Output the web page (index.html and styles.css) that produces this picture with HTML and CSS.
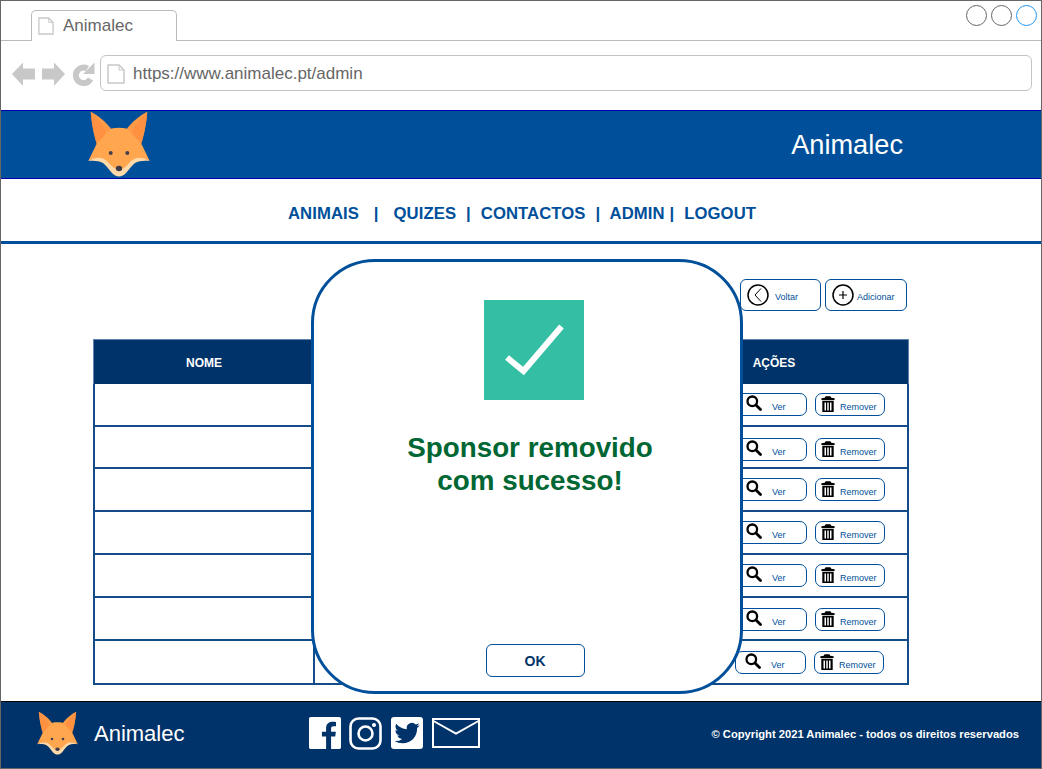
FILE: index.html
```html
<!DOCTYPE html>
<html lang="pt">
<head>
<meta charset="utf-8">
<title>Animalec</title>
<link rel="stylesheet" href="styles.css">
</head>
<body>
<svg class="defs" aria-hidden="true">
  <symbol id="fox" viewBox="0 0 62 66">
    <path fill="#ff9a47" d="M2.7 .7C10 4 18 11 24 19L10 36C6 26 3.500 12 2.700 .7ZM59.300 .7C52 4 44 11 38 19L52 36C56 26 58.500 12 59.300 .7Z"/>
    <path fill="#ff8a3d" d="M2.700 .7C9 8 16 14 18 21L10 36C6 26 3.500 12 2.700 .7ZM59.300 .7C53 8 46 14 44 21L52 36C56 26 58.500 12 59.300 .7Z" opacity=".55"/>
    <path fill="#ffa64f" d="M23.500 17.500C28 16.500 34 16.500 38.500 17.500L53 32L61.700 50C56 47 50 47 46 50C43 52 38 57 36 60L31 65L26 60C24 57 19 52 16 50C12 47 6 47 .3 50L9 32Z"/>
    <path fill="#ffd9a8" d="M.3 50C6 46.500 12 46 16 48C20 50 22 54 25 56C27 57.500 29 58 31 58C33 58 35 57.500 37 56C40 54 42 50 46 48C50 46 56 46.500 61.700 50C55 49.500 51 50 47 52C43 55 41 59 38 62C36 64 33.500 65.500 31 65.500C28.500 65.500 26 64 24 62C21 59 19 55 15 52C11 50 7 49.500 .3 50Z"/>
    <circle cx="22.700" cy="42" r="2" fill="#45404c"/>
    <circle cx="39.300" cy="42" r="2" fill="#45404c"/>
    <ellipse cx="31" cy="57.500" rx="3.200" ry="2.700" fill="#3c3a48"/>
  </symbol>
  <symbol id="page" viewBox="0 0 18 20">
    <path fill="#fff" stroke="#c8c8c8" stroke-width="1.500" d="M1 1H12L17 6V19H1Z"/>
    <path fill="none" stroke="#c8c8c8" d="M12 1V6H17"/>
  </symbol>
  <symbol id="search" viewBox="0 0 16 16">
    <circle cx="6.300" cy="6.300" r="4.800" fill="none" stroke="#000" stroke-width="2.300"/>
    <path stroke="#000" stroke-width="2.800" stroke-linecap="round" d="M10.200 10.200L14.500 14.500"/>
  </symbol>
  <symbol id="trash" viewBox="0 0 14 16">
    <path fill="#000" fill-rule="evenodd" d="M5.200 .3H8.800C9.600 .3 10 1 10.200 1.800L13.600 2.300V4H.4V2.300L3.800 1.800C4 1 4.400 .3 5.200 .3ZM1.300 4.800H12.700V16H1.300ZM3.500 6.500V14.500H5V6.500ZM6.250 6.500V14.500H7.750V6.500ZM9 6.500V14.500H10.500V6.500Z"/>
  </symbol>
</svg>

<div class="window">
  <div class="tabbar">
    <div class="tab">
      <svg class="tab-icon"><use href="#page"/></svg>
      <span>Animalec</span>
    </div>
    <div class="tab-fill">
      <span class="dot"></span><span class="dot"></span><span class="dot dot-active"></span>
    </div>
  </div>

  <div class="toolbar">
    <svg class="nav-arrow" viewBox="0 0 23 24"><path fill="#c8c8c8" d="M0 12L11 .5V6.500H23V17.500H11V24Z"/></svg>
    <svg class="nav-arrow" viewBox="0 0 23 24"><path fill="#c8c8c8" d="M23 12L12 .5V6.500H0V17.500H12V24Z"/></svg>
    <svg class="nav-reload" viewBox="0 0 22 24">
      <path fill="none" stroke="#c8c8c8" stroke-width="6" d="M17.500 17A7.800 7.800 0 1 1 14.500 6.500"/>
      <path fill="#c8c8c8" d="M21.500 .5V12H10Z"/>
    </svg>
    <div class="address">
      <svg class="address-icon"><use href="#page"/></svg>
      <span class="address-text">https://www.animalec.pt/admin</span>
    </div>
  </div>

  <header class="site-header">
    <svg class="fox-lg"><use href="#fox"/></svg>
    <span class="site-title">Animalec</span>
  </header>

  <nav class="site-nav">ANIMAIS   |   QUIZES  |  CONTACTOS  |  ADMIN |  LOGOUT</nav>

  <main class="content">
    <div class="actions">
      <button class="action-btn action-back">
        <svg class="action-icon" viewBox="0 0 22 22"><circle cx="11" cy="11" r="10" fill="none" stroke="#000" stroke-width="1.500"/><path fill="none" stroke="#000" stroke-width="1" d="M14 4.500L8 11L14 17.500"/></svg>
        <span>Voltar</span>
      </button>
      <button class="action-btn action-add">
        <svg class="action-icon" viewBox="0 0 22 22"><circle cx="11" cy="11" r="10" fill="none" stroke="#000" stroke-width="1.500"/><path stroke="#000" stroke-width="1.200" d="M11 7V15M7 11H15"/></svg>
        <span>Adicionar</span>
      </button>
    </div>

    <div class="table">
      <div class="thead">
        <div class="th col-name">NOME</div>
        <div class="th col-mid"></div>
        <div class="th col-actions">AÇÕES</div>
      </div>
      <div class="row"><div class="cell col-name"></div><div class="cell col-mid"></div><div class="cell col-actions row-actions"><a class="mini mini-ver"><svg class="mini-search"><use href="#search"/></svg><span>Ver</span></a><a class="mini mini-rem"><svg class="mini-trash"><use href="#trash"/></svg><span>Remover</span></a></div></div>
      <div class="row row-short"><div class="cell col-name"></div><div class="cell col-mid"></div><div class="cell col-actions row-actions row-actions-low"><a class="mini mini-ver"><svg class="mini-search"><use href="#search"/></svg><span>Ver</span></a><a class="mini mini-rem"><svg class="mini-trash"><use href="#trash"/></svg><span>Remover</span></a></div></div>
      <div class="row"><div class="cell col-name"></div><div class="cell col-mid"></div><div class="cell col-actions row-actions"><a class="mini mini-ver"><svg class="mini-search"><use href="#search"/></svg><span>Ver</span></a><a class="mini mini-rem"><svg class="mini-trash"><use href="#trash"/></svg><span>Remover</span></a></div></div>
      <div class="row"><div class="cell col-name"></div><div class="cell col-mid"></div><div class="cell col-actions row-actions"><a class="mini mini-ver"><svg class="mini-search"><use href="#search"/></svg><span>Ver</span></a><a class="mini mini-rem"><svg class="mini-trash"><use href="#trash"/></svg><span>Remover</span></a></div></div>
      <div class="row"><div class="cell col-name"></div><div class="cell col-mid"></div><div class="cell col-actions row-actions"><a class="mini mini-ver"><svg class="mini-search"><use href="#search"/></svg><span>Ver</span></a><a class="mini mini-rem"><svg class="mini-trash"><use href="#trash"/></svg><span>Remover</span></a></div></div>
      <div class="row"><div class="cell col-name"></div><div class="cell col-mid"></div><div class="cell col-actions row-actions row-actions-mid"><a class="mini mini-ver"><svg class="mini-search"><use href="#search"/></svg><span>Ver</span></a><a class="mini mini-rem"><svg class="mini-trash"><use href="#trash"/></svg><span>Remover</span></a></div></div>
      <div class="row row-tall"><div class="cell col-name"></div><div class="cell col-mid"></div><div class="cell col-actions row-actions row-actions-last"><a class="mini mini-ver"><svg class="mini-search"><use href="#search"/></svg><span>Ver</span></a><a class="mini mini-rem"><svg class="mini-trash"><use href="#trash"/></svg><span>Remover</span></a></div></div>
    </div>
  </main>

  <footer class="site-footer">
    <svg class="fox-sm"><use href="#fox"/></svg>
    <span class="footer-title">Animalec</span>
    <div class="social">
      <svg class="soc soc-fb" viewBox="0 0 24 24"><path fill="#fff" d="M22.676 0H1.324C.593 0 0 .593 0 1.324v21.352C0 23.408.593 24 1.324 24h11.494v-9.294H9.689v-3.621h3.129V8.410c0-3.099 1.894-4.785 4.659-4.785 1.325 0 2.464.097 2.796.141v3.240h-1.921c-1.500 0-1.792.721-1.792 1.771v2.311h3.584l-.465 3.630H16.560V24h6.115c.733 0 1.325-.592 1.325-1.324V1.324C24 .593 23.408 0 22.676 0"/></svg>
      <svg class="soc soc-ig" viewBox="0 0 33 33"><rect x="1.500" y="1.500" width="30" height="30" rx="8" fill="none" stroke="#fff" stroke-width="2.600"/><circle cx="16.500" cy="16.500" r="7" fill="none" stroke="#fff" stroke-width="2.600"/><circle cx="25" cy="8" r="2" fill="#fff"/></svg>
      <svg class="soc soc-tw" viewBox="0 0 32 32"><rect width="32" height="32" rx="3" fill="#fff"/><g transform="translate(3.500 3.500) scale(1.050)"><path fill="#003369" d="M23.953 4.570a10 10 0 01-2.825.775 4.958 4.958 0 002.163-2.723c-.951.555-2.005.959-3.127 1.184a4.920 4.920 0 00-8.384 4.482C7.690 8.095 4.067 6.130 1.640 3.162a4.822 4.822 0 00-.666 2.475c0 1.710.870 3.213 2.188 4.096a4.904 4.904 0 01-2.228-.616v.060a4.923 4.923 0 003.946 4.827 4.996 4.996 0 01-2.212.085 4.936 4.936 0 004.604 3.417 9.867 9.867 0 01-6.102 2.105c-.390 0-.779-.023-1.170-.067a13.995 13.995 0 007.557 2.209c9.053 0 13.998-7.496 13.998-13.985 0-.210 0-.420-.015-.630A9.935 9.935 0 0024 4.590z"/></g></svg>
      <svg class="soc soc-mail" viewBox="0 0 48 30"><rect x="1" y="1" width="46" height="28" fill="none" stroke="#fff" stroke-width="2"/><path fill="none" stroke="#fff" stroke-width="2" d="M1.500 3L24 15.500L46.500 3"/></svg>
    </div>
    <span class="copyright">© Copyright 2021 Animalec - todos os direitos reservados</span>
  </footer>

  <div class="modal">
    <svg class="check" viewBox="0 0 100 100"><rect width="100" height="100" fill="#34bfa5"/><path fill="none" stroke="#fff" stroke-width="6" d="M23 57.500L39.500 71L77.500 26.500"/></svg>
    <h2 class="modal-title">Sponsor removido<br>com sucesso!</h2>
    <button class="modal-ok">OK</button>
  </div>
</div>
</body>
</html>
```
FILE: styles.css
```css
* { box-sizing: border-box; }
html, body { margin: 0; padding: 0; background: #fff; }
body { font-family: "Liberation Sans", Arial, sans-serif; overflow: hidden; }
.defs { position: absolute; width: 0; height: 0; }

.window {
  position: relative;
  width: 1042px;
  height: 769px;
  border: 1px solid #666;
  display: flex;
  flex-direction: column;
  overflow: hidden;
}

/* browser chrome */
.tabbar { display: flex; height: 40px; flex: none; padding-top: 9px; }
.tabbar::before { content: ""; width: 30px; border-bottom: 1px solid #bbb; }
.tab {
  width: 146px;
  border: 1px solid #bbb;
  border-bottom: 0;
  border-radius: 5px 5px 0 0;
  display: flex;
  align-items: center;
  padding: 0 0 0 6px;
  gap: 9px;
  font-size: 17px;
  color: #666;
}
.tab-icon { width: 16px; height: 20px; }
.tab-fill {
  flex: 1;
  border-bottom: 1px solid #bbb;
  display: flex;
  justify-content: flex-end;
  gap: 4px;
  padding-right: 4px;
  margin-top: -5px;
}
.dot { width: 21px; height: 21px; border: 1px solid #666; border-radius: 50%; }
.dot-active { border-color: #2196f3; }

.toolbar {
  height: 69px;
  flex: none;
  display: flex;
  align-items: center;
  padding: 0 9px 5px 11px;
}
.nav-arrow { width: 23px; height: 24px; margin-right: 7px; margin-top: 2px; }
.nav-reload { width: 22px; height: 24px; margin-left: 1px; margin-right: 5px; margin-top: 2px; }
.address {
  flex: 1;
  height: 36px;
  border: 1px solid #c4c4c4;
  border-radius: 6px;
  display: flex;
  align-items: center;
  gap: 8px;
  padding-left: 6px;
  font-size: 17px;
  color: #666;
}
.address-icon { width: 18px; height: 20px; margin-top: 1px; }
.address-text { padding-top: 2px; }

/* site header */
.site-header {
  height: 69px;
  flex: none;
  background: #004f9a;
  border-top: 1px solid #0000b0;
  border-bottom: 1px solid #0000b0;
  display: flex;
  align-items: center;
  justify-content: space-between;
  padding: 0 138px 0 87px;
}
.fox-lg { width: 62px; height: 66px; margin-top: -2px; }
.site-title { color: #fff; font-size: 27.200px; }

.site-nav {
  height: 65px;
  flex: none;
  border-bottom: 3px solid #004f9a;
  padding-top: 25px;
  padding-left: 287px;
  font-size: 16.700px;
  letter-spacing: .06px;
  word-spacing: .3px;
  line-height: 20px;
  font-weight: 700;
  color: #004f9a;
  white-space: pre;
}

/* content */
.content {
  flex: 1;
  padding: 35px 0 0 92px;
}
.actions {
  width: 814px;
  display: flex;
  justify-content: flex-end;
  gap: 4px;
}
.action-btn {
  height: 32px;
  background: #fff;
  border: 1px solid #004f9a;
  border-radius: 6px;
  display: flex;
  align-items: center;
  padding: 0 0 0 6px;
  font-family: inherit;
  font-size: 9px;
  color: #004f9a;
}
.action-back { width: 81px; gap: 6px; }
.action-add { width: 82px; gap: 3px; }
.action-icon { width: 22px; height: 22px; }
.action-btn span { padding-top: 4px; }

.table { width: 816px; margin-top: 28px; }
.thead { display: flex; height: 45px; background: #003369; border: 1px solid #5f84ad; border-bottom: 0; }
.th {
  display: flex;
  align-items: center;
  justify-content: center;
  color: #fff;
  font-size: 12px;
  font-weight: 700;
  padding-top: 2px;
}
.row {
  display: flex;
  height: 43px;
  border: 2px solid #134c88;
  border-top: 0;
}
.row-short { height: 42px; }
.row-tall { height: 44px; }
.col-name { width: 220px; }
.col-mid { width: 326px; }
.col-actions { flex: 1; }
.cell.col-name { border-right: 2px solid #134c88; }

.row-actions {
  display: flex;
  align-items: center;
  justify-content: flex-end;
  gap: 8px;
  padding-right: 22px;
}
.row-actions-low { padding-top: 5px; }
.row-actions-mid { padding-top: 2px; }
.row-actions-last { padding-right: 23px; padding-top: 1px; }

.mini {
  flex: none;
  height: 23px;
  border: 1px solid #004f9a;
  border-radius: 7px;
  background: #fff;
  display: flex;
  align-items: center;
  font-size: 9px;
  color: #004f9a;
}
.mini-ver { width: 71px; padding-left: 9px; gap: 10px; }
.mini-rem { width: 70px; padding-left: 5px; gap: 5px; }
.mini span { padding-top: 5px; }
.mini-search { width: 16px; height: 16px; margin-top: -3px; }
.mini-trash { width: 14px; height: 16px; margin-top: -2px; }

/* footer */
.site-footer {
  height: 67px;
  flex: none;
  background: #003369;
  border-top: 1px solid #000;
  display: flex;
  align-items: center;
  padding: 0 22px 2px 36px;
  color: #fff;
}
.fox-sm { width: 41px; height: 44px; margin-top: -2px; }
.footer-title { font-size: 22px; margin-left: 16px; }
.social { display: flex; align-items: center; gap: 9px; margin-left: 125px; margin-top: -2px; }
.soc { display: block; }
.soc-fb { width: 32px; height: 32px; margin-right: -1px; }
.soc-ig { width: 33px; height: 33px; }
.soc-tw { width: 32px; height: 32px; }
.soc-mail { width: 48px; height: 30px; }
.copyright { margin-left: auto; font-size: 11.200px; font-weight: 700; }

/* modal overlay */
.modal {
  position: absolute;
  left: 310px;
  top: 258px;
  width: 432px;
  height: 435px;
  background: #fff;
  border: 3px solid #004f9a;
  border-radius: 64px;
  display: flex;
  flex-direction: column;
  align-items: center;
  padding-top: 38px;
}
.check { width: 100px; height: 100px; flex: none; margin-left: 14px; }
.modal-title {
  margin: 31px 0 0 6px;
  font-size: 27.800px;
  line-height: 33px;
  font-weight: 700;
  color: #006633;
  text-align: center;
}
.modal-ok {
  margin-top: auto;
  margin-bottom: 14px;
  margin-left: 16px;
  width: 99px;
  height: 33px;
  border: 1px solid #004f9a;
  border-radius: 6px;
  background: #fff;
  font-family: inherit;
  font-size: 14px;
  font-weight: 700;
  color: #003369;
}
```
